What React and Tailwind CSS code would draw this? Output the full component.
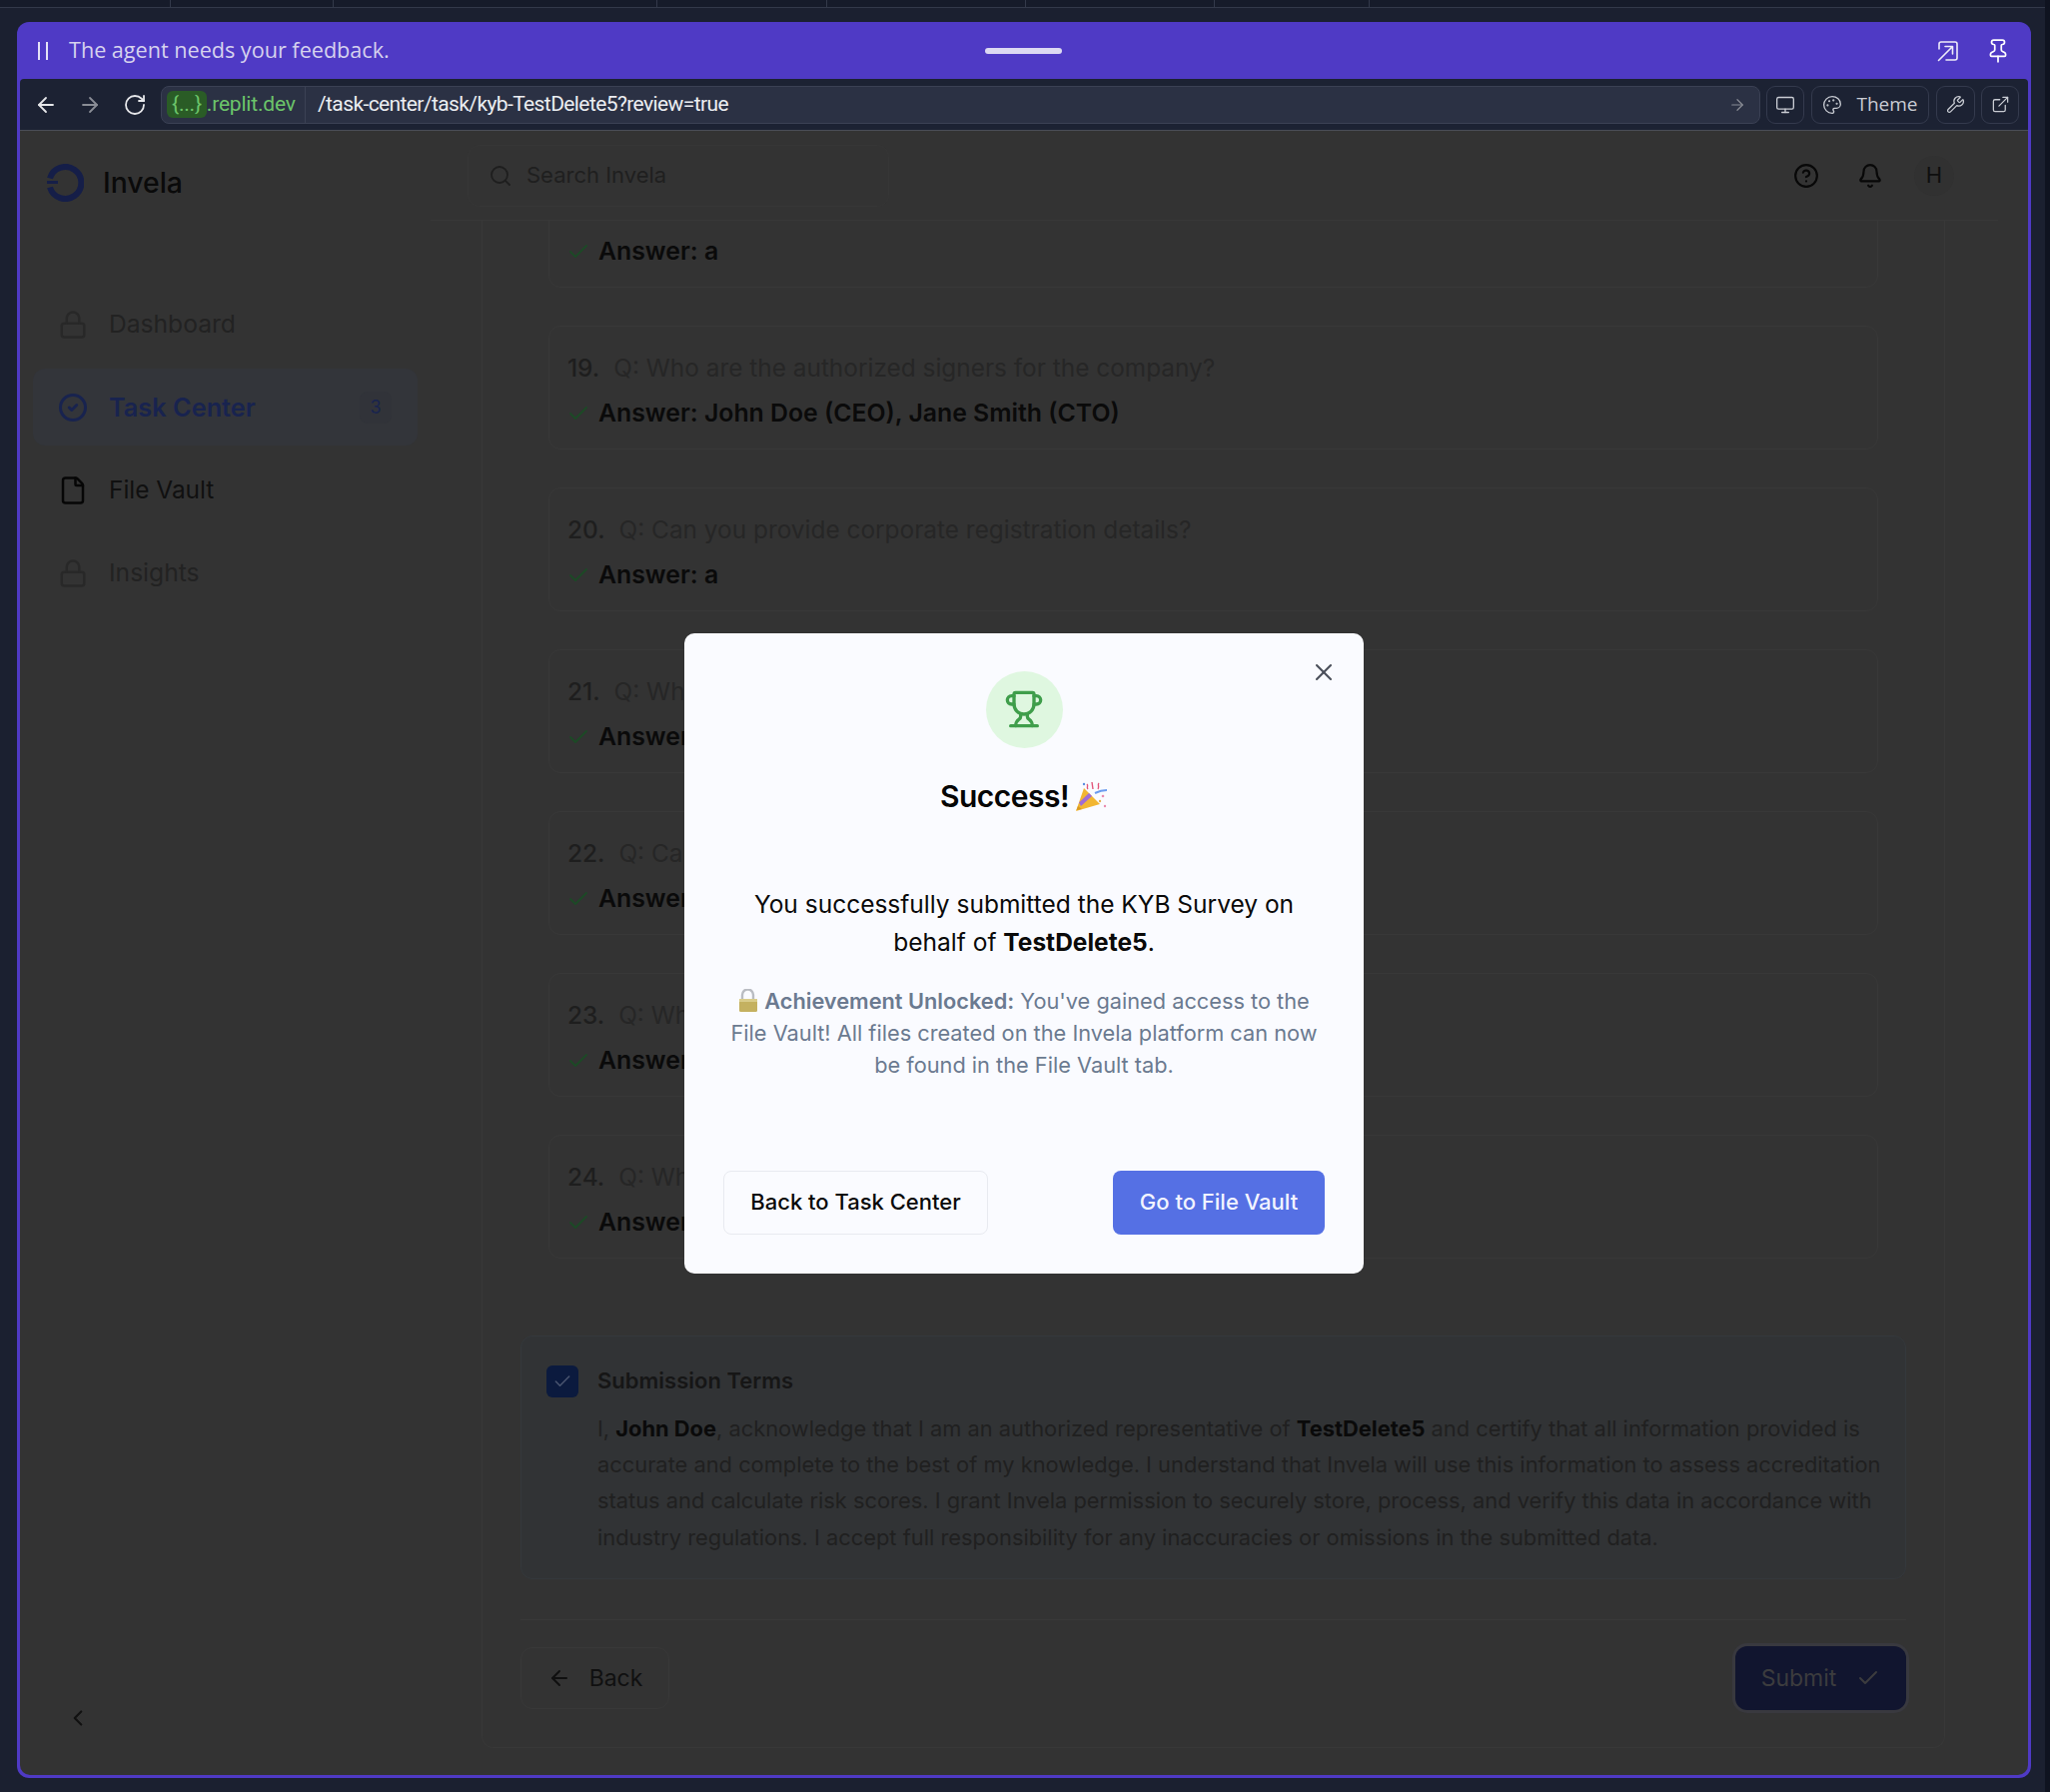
import { ArrowLeft, ArrowRight, Bell, Check, ChevronLeft, CircleCheck, CircleHelp, ExternalLink, File, Lock, Monitor, Palette, Pin, RotateCw, Search, Trophy, Wrench, X } from "lucide-react";

const QUESTIONS = [
  { n: 19, q: "Who are the authorized signers for the company?", a: "John Doe (CEO), Jane Smith (CTO)" },
  { n: 20, q: "Can you provide corporate registration details?", a: "a" },
  { n: 21, q: "What is the company's primary business activity?", a: "a" },
  { n: 22, q: "Can you share the ownership structure?", a: "a" },
  { n: 23, q: "What is the registered business address?", a: "a" },
  { n: 24, q: "What licenses does the company hold?", a: "a" },
];

function ExitIcon() {
  return (
    <svg width="22" height="22" viewBox="0 0 22 22" fill="none" stroke="#ffffff" strokeWidth="1.6" strokeLinecap="round" strokeLinejoin="round" className="opacity-90">
      <path d="M2 9V4a2 2 0 0 1 2-2h14a2 2 0 0 1 2 2v14a2 2 0 0 1-2 2H9" />
      <path d="M1.5 20.5 15 7M8 6.5h7.5V14" />
    </svg>
  );
}

function Logo() {
  return (
    <svg width="38" height="38" viewBox="0 0 38 38" fill="none">
      <path d="M4 14.5A16 16 0 1 1 4 23.5" stroke="#151e48" strokeWidth="6" />
      <path d="M1 18.5h11" stroke="#151e48" strokeWidth="3" />
    </svg>
  );
}

function PartyPopper() {
  return (
    <svg width="33" height="33" viewBox="0 0 33 33" className="shrink-0">
      <path d="M1 31 9 8l16 16z" fill="#f2b632" />
      <path d="M4 22.5 14 13l3 3-11 10z" fill="#a06cd5" />
      <path d="M1.5 30 3 26l4 3z" fill="#d99a22" />
      <path d="M12 4c2 2-1 3 1 5M17 2l1 7M24 3c-2 2 1 3-1 6" stroke="#e2557a" strokeWidth="1.4" fill="none" />
      <path d="M20 13c4-2 8-3 12-3" stroke="#6b9cf0" strokeWidth="2" fill="none" />
      <circle cx="28" cy="16" r="1.3" fill="#e98bb0" />
      <circle cx="25" cy="21" r="1.2" fill="#e6b04c" />
      <circle cx="30" cy="26" r="1.2" fill="#e98bb0" />
      <circle cx="9" cy="4" r="1.2" fill="#5a8de0" />
    </svg>
  );
}

function OpenLock() {
  return (
    <svg width="20" height="23" viewBox="0 0 20 23" className="inline-block align-[-3px] mr-[6px]">
      <path d="M4 10V6a5.5 5.5 0 0 1 11 0v4" fill="none" stroke="#b9bcc2" strokeWidth="2.4" />
      <rect x="1" y="10" width="18" height="13" rx="1.5" fill="#c4b160" />
      <rect x="1" y="10" width="18" height="3" fill="#d9cc8a" />
    </svg>
  );
}

function NavItem({ icon: Icon, label, iconClass, textClass }) {
  return (
    <div className="flex items-center h-[77px] pl-[38px] gap-[21px]">
      <Icon size={30} strokeWidth={2} className={iconClass} />
      <span className={textClass}>{label}</span>
    </div>
  );
}

function QuestionCard({ n, q, a }) {
  return (
    <div className="h-[124px] shrink-0 rounded-xl border border-[#383838] px-[18px] pt-[23px]">
      <div className="flex items-center h-[36px] text-[24.4px] text-[#262626]">
        <span className="text-[#1e1e1e] font-medium mr-[14px]">{n}.</span>
        <span>Q: {q}</span>
      </div>
      <Answer text={a} />
    </div>
  );
}

function Answer({ text }) {
  return (
    <div className="flex items-center h-[36px] mt-[10px] text-[24.8px] font-semibold text-[#0a0a0a]">
      <Check size={24} strokeWidth={1.8} className="text-[#1c4a26] -ml-[1px] mr-[8px]" />
      Answer: {text}
    </div>
  );
}

function BarButton({ children, className }) {
  return (
    <div className={`flex items-center justify-center h-[38px] rounded-[9px] border border-[#343a4d] text-[#c9ccd3] ${className}`}>
      {children}
    </div>
  );
}

export default function App() {
  return (
    <div className="relative h-[1794px] w-[2052px] overflow-hidden bg-[#1b2030] border-r-[5px] border-r-[#0f1320] font-['Inter',sans-serif]">
      {/* tab strip of the host page */}
      <div className="flex h-[8px] bg-[#161b2a] border-b border-[#33394a]">
        <div className="w-[171px] border-r border-[#33394a]" />
        <div className="w-[163px] border-r border-[#33394a]" />
        <div className="w-[324px] border-r border-[#33394a]" />
        <div className="w-[170px] border-r border-[#33394a]" />
        <div className="w-[199px] border-r border-[#33394a]" />
        <div className="w-[189px] border-r border-[#33394a]" />
        <div className="w-[155px] border-r border-[#33394a]" />
      </div>

      <div className="ml-[17px] mt-[14px] w-[2016px] h-[1758px] rounded-[12px] bg-[#4f3ac5] flex flex-col overflow-hidden">
        {/* agent banner */}
        <div className="flex items-center h-[57px] shrink-0 pl-[21px] pr-[20px] font-['Open_Sans',sans-serif]">
          <div className="flex gap-[6px] mr-[21px]">
            <div className="w-[2px] h-[18px] bg-[#e4e2f6]" />
            <div className="w-[2px] h-[18px] bg-[#e4e2f6]" />
          </div>
          <span className="w-[448px] text-[21.6px] text-[#d6d2ee]">The agent needs your feedback.</span>
          <div className="ml-[469px] w-[77px] h-[6px] rounded-full bg-[#dcd9f2]" />
          <div className="ml-auto flex items-center gap-[26px]">
            <ExitIcon />
            <Pin size={26} strokeWidth={1.6} className="text-white" />
          </div>
        </div>

        {/* browser bar */}
        <div className="flex items-center h-[52px] shrink-0 mx-[3px] bg-[#1c2233] border-b border-[#4a4d57] rounded-t-[4px] pl-[14px] pr-[7px]">
          <ArrowLeft size={24} strokeWidth={1.8} className="text-[#e6e7ea]" />
          <ArrowRight size={24} strokeWidth={1.8} className="ml-[20px] text-[#8a8d96]" />
          <RotateCw size={24} strokeWidth={1.8} className="ml-[21px] text-[#e6e7ea]" />
          <div className="ml-[14px] flex items-center w-[1601px] h-[38px] rounded-[8px] border border-[#3b4154] bg-[#2b3144] font-['Roboto',sans-serif] text-[21px] tracking-[-0.6px]">
            <div className="flex items-center h-full w-[144px] pl-[5px] border-r border-[#3b4154] text-[#6cc46a] tracking-[-0.2px]">
              <span className="rounded-[6px] bg-[#2a5c26] px-[5px] h-[27px] leading-[26px]">{"{...}"}</span>
              <span>.replit.dev</span>
            </div>
            <span className="ml-[12px] text-[#eceef2]">/task-center/task/kyb-TestDelete5?review=true</span>
            <ArrowRight size={18} strokeWidth={1.6} className="ml-auto mr-[13px] text-[#8a8d96]" />
          </div>
          <BarButton className="ml-[6px] w-[38px]"><Monitor size={20} strokeWidth={1.6} /></BarButton>
          <BarButton className="ml-[7px] w-[118px] gap-[14px] text-[19px] font-['Open_Sans',sans-serif]">
            <Palette size={20} strokeWidth={1.6} />
            Theme
          </BarButton>
          <BarButton className="ml-[7px] w-[39px]"><Wrench size={19} strokeWidth={1.6} /></BarButton>
          <BarButton className="ml-[6px] w-[38px]"><ExternalLink size={19} strokeWidth={1.6} /></BarButton>
        </div>

        {/* app under the dialog */}
        <div className="relative flex flex-1 min-h-0 mx-[3px] mb-[3px] rounded-b-[10px] bg-[#333333] overflow-hidden">
          <aside className="relative w-[411px] shrink-0">
            <div className="flex items-center h-[104px] pl-[26px] gap-[19px]">
              <Logo />
              <span className="text-[28.3px] font-medium text-[#0a0a0a]">Invela</span>
            </div>
            <div className="mt-[51px] flex flex-col gap-[6px]">
              <NavItem icon={Lock} label="Dashboard" iconClass="text-[#282828]" textClass="text-[24.6px] text-[#222222]" />
              <div className="flex items-center h-[77px] mx-[13px] pl-[25px] gap-[21px] rounded-xl bg-[#33353a]">
                <CircleCheck size={30} strokeWidth={2.4} className="text-[#18234f]" />
                <span className="text-[25.3px] font-semibold text-[#18234f]">Task Center</span>
                <span className="ml-auto mr-[26px] flex items-center justify-center w-[32px] h-[32px] rounded-lg bg-[#313339] text-[18px] text-[#18234f]">3</span>
              </div>
              <NavItem icon={File} label="File Vault" iconClass="text-[#060606]" textClass="text-[24.4px] text-[#101010]" />
              <NavItem icon={Lock} label="Insights" iconClass="text-[#282828]" textClass="text-[24.6px] text-[#222222]" />
            </div>
            <ChevronLeft size={26} strokeWidth={2} className="absolute left-[45px] bottom-[44px] text-[#111111]" />
          </aside>

          <main className="flex-1 min-w-0 flex flex-col">
            <header className="flex items-center h-[90px] shrink-0 w-[1569px] border-b border-[#383838] pl-[37px]">
              <div className="flex items-center w-[422px] h-[62px] rounded-xl border border-[#363636] pl-[20px] gap-[14px] text-[#1e1e1e]">
                <Search size={24} strokeWidth={1.8} />
                <span className="text-[22px] text-[#1f1f1f]">Search Invela</span>
              </div>
              <div className="ml-auto flex items-center pr-[44px]">
                <CircleHelp size={26} strokeWidth={2} className="text-[#080808]" />
                <Bell size={26} strokeWidth={2} className="ml-[38px] text-[#080808]" />
                <span className="flex items-center justify-center ml-[31px] w-[40px] h-[40px] rounded-full bg-[#313131] text-[22px] text-[#0f0f0f]">H</span>
              </div>
            </header>

            <div className="ml-[51px] w-[1465px] flex-1 min-h-0 mb-[27px] rounded-b-xl border-x border-b border-[#383838] px-[38px] flex flex-col overflow-hidden">
              <div className="mx-[28px] -mt-[57px] flex flex-col gap-[38px]">
                <div className="h-[124px] shrink-0 rounded-xl border border-[#383838] px-[18px] pt-[59px]">
                  <Answer text="a" />
                </div>
                {QUESTIONS.map((item) => (
                  <QuestionCard key={item.n} {...item} />
                ))}
              </div>

              <div className="mt-[77px] h-[244px] shrink-0 flex gap-[19px] rounded-xl border border-[#34383c] bg-[#313335] pl-[25px] pt-[29px]">
                <div className="flex items-center justify-center w-[32px] h-[32px] shrink-0 rounded-md bg-[#0b1a3e]">
                  <Check size={20} strokeWidth={1.8} className="text-[#4a5570]" />
                </div>
                <div className="w-[1295px]">
                  <div className="text-[22px] font-semibold leading-[30px] text-[#161616]">Submission Terms</div>
                  <p className="mt-[15px] text-[21.85px] leading-[36.2px] text-[#202020]">
                    I, <b className="font-bold text-[#0a0a0a]">John Doe</b>, acknowledge that I am an authorized representative of <b className="font-bold text-[#0a0a0a]">TestDelete5</b> and certify that all information provided is accurate and complete to the best of my knowledge. I understand that Invela will use this information to assess accreditation status and calculate risk scores. I grant Invela permission to securely store, process, and verify this data in accordance with industry regulations. I accept full responsibility for any inaccuracies or omissions in the submitted data.
                  </p>
                </div>
              </div>

              <div className="mt-[40px] border-t border-[#383838] pt-[26px] flex items-center justify-between">
                <div className="flex items-center justify-center gap-[18px] w-[149px] h-[62px] rounded-xl border border-[#383838] text-[23px] text-[#101010]">
                  <ArrowLeft size={24} strokeWidth={2} />
                  Back
                </div>
                <div className="flex items-center justify-center gap-[20px] w-[171px] h-[64px] rounded-xl bg-[#11152f] ring-[3px] ring-[#39393f] text-[23px] text-[#3c3c3e]">
                  Submit
                  <Check size={24} strokeWidth={2} />
                </div>
              </div>
            </div>
          </main>

          {/* dialog */}
          <div className="absolute inset-0 flex items-center justify-center backdrop-blur-[0.5px]">
            <div className="relative w-[680px] rounded-[10px] bg-[#fafbff] px-[39px] pt-[38px] pb-[39px] flex flex-col items-center">
              <X size={28} strokeWidth={1.8} className="absolute right-[26px] top-[25px] text-[#4a4f5a]" />
              <div className="flex items-center justify-center w-[77px] h-[77px] rounded-full bg-[#dff7e0]">
                <Trophy size={40} strokeWidth={2} className="text-[#3f9e4b]" />
              </div>
              <div className="mt-[31px] flex items-center gap-[6px] h-[36px] text-[30px] font-semibold tracking-[-0.5px] text-[#050505]">
                Success!
                <PartyPopper />
              </div>
              <p className="mt-[70px] w-[600px] text-center text-[24.5px] leading-[38px] text-[#0a0a0a]">
                You successfully submitted the KYB Survey on behalf of <b className="font-bold">TestDelete5</b>.
              </p>
              <p className="mt-[24px] w-[600px] text-center text-[21.75px] leading-[32px] text-[#6b7a90]">
                <OpenLock />
                <b className="font-semibold">Achievement Unlocked:</b> You've gained access to the File Vault! All files created on the Invela platform can now be found in the File Vault tab.
              </p>
              <div className="mt-[90px] w-full flex items-center justify-between">
                <div className="flex items-center justify-center w-[265px] h-[64px] rounded-[8px] border border-[#e8eaf0] text-[22px] font-medium text-[#0a0a0a]">
                  Back to Task Center
                </div>
                <div className="flex items-center justify-center w-[212px] h-[64px] rounded-[8px] bg-[#5570e4] text-[22px] font-medium text-[#f2f4ff]">
                  Go to File Vault
                </div>
              </div>
            </div>
          </div>
        </div>
      </div>
    </div>
  );
}
